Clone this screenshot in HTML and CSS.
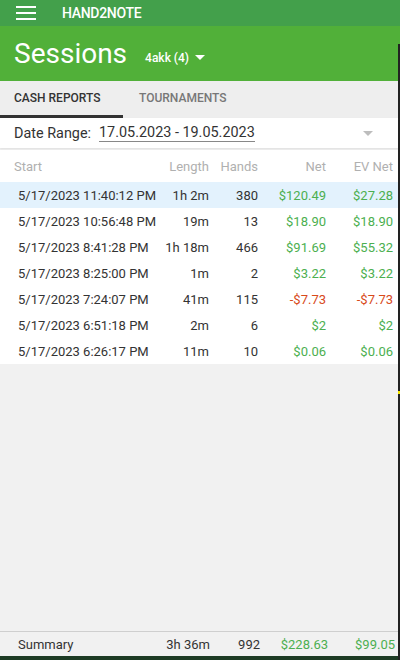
FILE: index.html
```html
<!DOCTYPE html>
<html lang="en">

<head>
    <meta charset="UTF-8">
    <meta name="viewport" content="width=device-width, initial-scale=1.0">
    <title>Sessions</title>

    <link rel="stylesheet" href="styles.css">
</head>

<body>

    <div class="app">
        <div class="topbar">
            <svg class="menu" width="20" height="14" viewBox="0 0 20 14">
                <rect x="0" y="0" width="20" height="2" fill="#fff"/>
                <rect x="0" y="6" width="20" height="2" fill="#fff"/>
                <rect x="0" y="12" width="20" height="2" fill="#fff"/>
            </svg>
            <span class="brand">HAND2NOTE</span>
        </div>

        <div class="header">
            <span class="title">Sessions</span>
            <span class="player">4akk (4)</span>
            <svg class="caret" width="10" height="5" viewBox="0 0 10 5">
                <polygon points="0,0 10,0 5,5" fill="#fff"/>
            </svg>
        </div>

        <div class="tabs">
            <div class="tab active">CASH REPORTS</div>
            <div class="tab">TOURNAMENTS</div>
        </div>

        <div class="range">
            <span class="range-label">Date Range:</span>
            <span class="range-value">17.05.2023 - 19.05.2023</span>
            <svg class="range-caret" width="10" height="5" viewBox="0 0 10 5">
                <polygon points="0,0 10,0 5,5" fill="#bdbdbd"/>
            </svg>
        </div>

        <div class="table">
            <div class="row head">
                <span class="c-start">Start</span>
                <span>Length</span>
                <span>Hands</span>
                <span>Net</span>
                <span>EV Net</span>
            </div>
            <div class="row selected">
                <span class="c-start">5/17/2023 11:40:12 PM</span>
                <span>1h 2m</span>
                <span>380</span>
                <span class="win">$120.49</span>
                <span class="win">$27.28</span>
            </div>
            <div class="row">
                <span class="c-start">5/17/2023 10:56:48 PM</span>
                <span>19m</span>
                <span>13</span>
                <span class="win">$18.90</span>
                <span class="win">$18.90</span>
            </div>
            <div class="row">
                <span class="c-start">5/17/2023 8:41:28 PM</span>
                <span>1h 18m</span>
                <span>466</span>
                <span class="win">$91.69</span>
                <span class="win">$55.32</span>
            </div>
            <div class="row">
                <span class="c-start">5/17/2023 8:25:00 PM</span>
                <span>1m</span>
                <span>2</span>
                <span class="win">$3.22</span>
                <span class="win">$3.22</span>
            </div>
            <div class="row">
                <span class="c-start">5/17/2023 7:24:07 PM</span>
                <span>41m</span>
                <span>115</span>
                <span class="loss">-$7.73</span>
                <span class="loss">-$7.73</span>
            </div>
            <div class="row">
                <span class="c-start">5/17/2023 6:51:18 PM</span>
                <span>2m</span>
                <span>6</span>
                <span class="win">$2</span>
                <span class="win">$2</span>
            </div>
            <div class="row">
                <span class="c-start">5/17/2023 6:26:17 PM</span>
                <span>11m</span>
                <span>10</span>
                <span class="win">$0.06</span>
                <span class="win">$0.06</span>
            </div>
        </div>

        <div class="filler"></div>

        <div class="row summary">
            <span class="c-start">Summary</span>
            <span>3h 36m</span>
            <span>992</span>
            <span class="win">$228.63</span>
            <span class="win">$99.05</span>
        </div>

        <div class="footer"></div>

        <div class="edge"></div>
        <div class="edge-mark"></div>
    </div>

</body>

</html>
```

FILE: styles.css
```css
body {
    margin: 0;
    background-color: #f1f1f1;
    font-family: Roboto, "Liberation Sans", sans-serif;
    color: #333;
}

.app {
    position: relative;
    display: flex;
    flex-direction: column;
    width: 400px;
    height: 660px;
    overflow: hidden;
}

.topbar {
    display: flex;
    align-items: center;
    height: 26px;
    padding-left: 16px;
    background-color: #43a04b;
    color: white;
}

.menu {
    margin-right: 26px;
}

.brand {
    font-size: 14px;
    font-weight: 500;
    letter-spacing: -0.3px;
}

.header {
    display: flex;
    align-items: center;
    height: 55px;
    padding-left: 14px;
    background-color: #51b039;
    color: white;
}

.title {
    font-size: 28px;
    margin-right: 18px;
}

.player {
    font-size: 12px;
    font-weight: 500;
    margin-top: 8px;
    margin-right: 6px;
}

.caret {
    margin-top: 8px;
}

.tabs {
    display: flex;
    height: 37px;
    background-color: #eeeeee;
}

.tab {
    display: flex;
    align-items: center;
    padding: 0 14px 3px 16px;
    font-size: 12px;
    font-weight: 500;
    color: #777;
}

.tab.active {
    width: 123px;
    box-sizing: border-box;
    padding-left: 14px;
    color: #333;
    border-bottom: 3px solid #333;
    padding-bottom: 0;
}

.range {
    display: flex;
    align-items: center;
    height: 30px;
    padding-left: 14px;
    background-color: white;
    box-shadow: 0 1px 2px rgba(0, 0, 0, 0.08);
    font-size: 14.4px;
}

.range-label {
    margin-right: 8px;
}

.range-value {
    border-bottom: 1px solid #888;
    line-height: 16px;
}

.range-caret {
    margin-left: auto;
    margin-right: 27px;
}

.table {
    margin-top: 2px;
    background-color: white;
}

.row {
    display: grid;
    grid-template-columns: 1fr 50px 49px 68px 67px;
    align-items: center;
    height: 26px;
    padding: 0 7px 0 18px;
    font-size: 13px;
}

.row span {
    text-align: right;
    white-space: nowrap;
}

.row .c-start {
    text-align: left;
}

.row.head {
    height: 32px;
    padding-left: 14px;
    color: #b0b0b0;
}

.row.selected {
    background-color: #e3f2fd;
}

.win {
    color: #4caf50;
}

.loss {
    color: #d84a1b;
}

.filler {
    flex: 1;
}

.summary {
    height: 23px;
    padding-top: 1px;
    padding-right: 5px;
    border-top: 1px solid #cfcfcf;
    grid-template-columns: 1fr 50px 50px 68px 67px;
}

.footer {
    height: 4px;
    background-color: #1d3b24;
}

.edge {
    position: absolute;
    top: 44px;
    right: 0;
    bottom: 0;
    width: 2px;
    background-color: #222;
}

.edge-mark {
    position: absolute;
    top: 391px;
    right: 0;
    width: 2px;
    height: 3px;
    background-color: #f5e600;
}
```
